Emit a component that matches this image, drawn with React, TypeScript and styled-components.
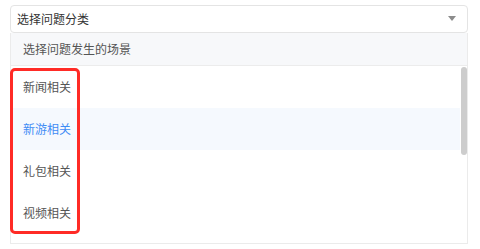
import React from "react";
import styled, { createGlobalStyle } from "styled-components";

const Global = createGlobalStyle`
  html, body { margin: 0; padding: 0; background: #ffffff; }
  body { font-family: "Noto Sans CJK SC", "Noto Sans", sans-serif; }
`;

const Page = styled.div`
  position: relative;
  padding: 5px 12px 0 10px;
  width: 480px;
  box-sizing: border-box;
`;

const Select = styled.div`
  height: 28px;
  box-sizing: border-box;
  border: 1px solid #e4e4e4;
  border-radius: 4px;
  display: flex;
  align-items: center;
  justify-content: space-between;
  padding: 0 11px 1px 6px;
  font-size: 12px;
  color: #333333;
  background: #fff;
`;

const Caret = styled.span`
  width: 0;
  height: 0;
  border-left: 4px solid transparent;
  border-right: 4px solid transparent;
  border-top: 5px solid #8c8c8c;
`;

const Panel = styled.div`
  border: 1px solid #ebebeb;
  border-top: none;
  height: 211px;
  box-sizing: border-box;
  display: flex;
  flex-direction: column;
  background: #fff;
`;

const Header = styled.div`
  height: 33px;
  box-sizing: border-box;
  flex: none;
  display: flex;
  align-items: center;
  padding: 0 0 1px 12px;
  background: #f7f8fa;
  border-bottom: 1px solid #ececec;
  font-size: 12px;
  color: #555555;
`;

const Body = styled.div`
  flex: 1;
  display: flex;
  min-height: 0;
`;

const List = styled.div`
  flex: 1;
  overflow: hidden;
`;

const Track = styled.div`
  width: 7px;
  flex: none;
  padding: 1px 0 0 1px;
  box-sizing: border-box;
`;

const Thumb = styled.div`
  height: 88px;
  background: #cdcdcd;
  border-radius: 3px;
`;

const Item = styled.div<{ $active?: boolean }>`
  height: 42px;
  display: flex;
  align-items: center;
  padding: 0 0 1px 12px;
  box-sizing: border-box;
  font-size: 12px;
  color: ${(p) => (p.$active ? "#3f8cf5" : "#555555")};
  background: ${(p) => (p.$active ? "#f5f9fe" : "transparent")};
`;

const Highlight = styled.div`
  position: absolute;
  left: 10px;
  top: 68px;
  width: 70px;
  height: 166px;
  box-sizing: border-box;
  border: 3px solid #ff2b26;
  border-radius: 5px;
  pointer-events: none;
`;

const items = ["新闻相关", "新游相关", "礼包相关", "视频相关"];

export default function App() {
  return (
    <Page>
      <Global />
      <Select>
        <span>选择问题分类</span>
        <Caret />
      </Select>
      <Panel>
        <Header>选择问题发生的场景</Header>
        <Body>
          <List>
            {items.map((t, i) => (
              <Item key={t} $active={i === 1}>
                {t}
              </Item>
            ))}
          </List>
          <Track>
            <Thumb />
          </Track>
        </Body>
      </Panel>
      <Highlight />
    </Page>
  );
}
